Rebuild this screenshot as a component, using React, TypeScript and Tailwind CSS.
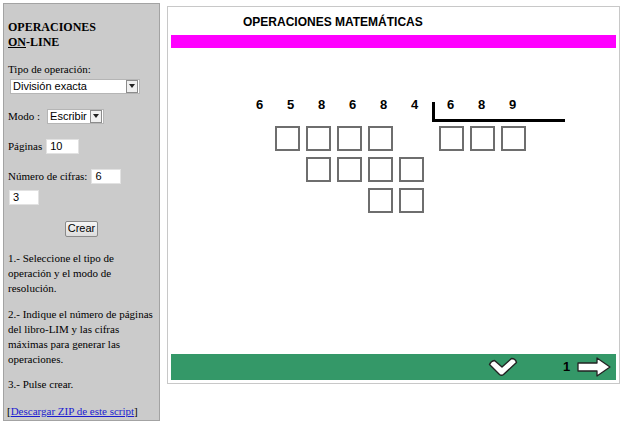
import React from 'react';

const dividend = ['6', '5', '8', '6', '8', '4'];
const divisor = ['6', '8', '9'];

function Box() {
  return <div className="w-[25px] h-[25px] border-2 border-[#6e6e6e] bg-white" />;
}

function Select({ value, width }: { value: string; width: string }) {
  return (
    <div className={`${width} h-[15px] flex items-center bg-white border border-[#b5b5b5] font-['Liberation_Sans'] text-[11px] text-black`}>
      <span className="flex-1 pl-[2px] leading-[13px] whitespace-nowrap overflow-hidden">{value}</span>
      <span className="w-[12px] h-[13px] mr-[1px] flex items-center justify-center bg-[#f0f0f0] border border-[#8c8c8c]">
        <svg width="6" height="4" viewBox="0 0 6 4">
          <path d="M0 0 H6 L3 4 Z" fill="#222" />
        </svg>
      </span>
    </div>
  );
}

function Field({ value, width }: { value: string; width: string }) {
  return (
    <div className={`${width} h-[15px] bg-white border border-[#e2e2e2] pl-[3px] font-['Liberation_Sans'] text-[11px] leading-[13px] text-black`}>
      {value}
    </div>
  );
}

export default function App() {
  return (
    <div className="w-[630px] h-[424px] bg-white flex items-start overflow-hidden">
      {/* left panel */}
      <div className="ml-[3px] mt-[3px] w-[157px] h-[418px] bg-[#cbcbcb] border border-[#a3a3a3] pl-[4px] pt-[16px] font-['Liberation_Serif',serif] text-[11px] leading-[15px] text-black">
        <div className="text-[12px] font-bold">
          OPERACIONES
          <br />
          <span className="underline">ON</span>-LINE
        </div>

        <div className="mt-[12px]">Tipo de operación:</div>
        <div className="mt-[1.5px] ml-[2px]">
          <Select value="División exacta" width="w-[130px]" />
        </div>

        <div className="mt-[15px] flex items-center h-[15px]">
          <span>Modo :</span>
          <span className="ml-[7px]">
            <Select value="Escribir" width="w-[57px]" />
          </span>
        </div>

        <div className="mt-[15px] flex items-center h-[15px]">
          <span>Páginas</span>
          <span className="ml-[4px]">
            <Field value="10" width="w-[33px]" />
          </span>
        </div>

        <div className="mt-[15px] flex items-center h-[16px]">
          <span>Número de cifras:</span>
          <span className="ml-[4px]">
            <Field value="6" width="w-[30px]" />
          </span>
        </div>
        <div className="mt-[5px] ml-[1px]">
          <Field value="3" width="w-[30px]" />
        </div>

        <div className="mt-[16px] flex justify-center pr-[4px]">
          <button className="w-[33px] h-[16px] rounded-[2px] border border-[#8a8a8a] bg-gradient-to-b from-[#f6f6f6] to-[#dcdcdc] font-['Liberation_Sans'] text-[11px] leading-[13px] text-black">
            Crear
          </button>
        </div>

        <p className="mt-[14.5px] whitespace-nowrap">
          1.- Seleccione el tipo de
          <br />
          operación y el modo de
          <br />
          resolución.
        </p>
        <p className="mt-[11px] whitespace-nowrap">
          2.- Indique el número de páginas
          <br />
          del libro-LIM y las cifras
          <br />
          máximas para generar las
          <br />
          operaciones.
        </p>
        <p className="mt-[10px]">3.- Pulse crear.</p>
        <p className="mt-[12px] -ml-[1px] whitespace-nowrap">
          [<a className="text-[#1b1bd0] underline">Descargar ZIP de este script</a>]
        </p>
      </div>

      {/* main panel */}
      <div className="ml-[7px] mt-[6px] w-[453px] h-[378px] border border-[#c8c8c8] bg-white flex flex-col">
        <div className="mt-[7px] pl-[75px] font-['Liberation_Sans',sans-serif] font-bold text-[12px] leading-[16px] text-black">
          OPERACIONES MATEMÁTICAS
        </div>
        <div className="mt-[5px] mx-[3px] h-[13px] bg-[#ff00ff]" />

        <div className="mt-[49px] ml-[76px] flex flex-col font-['Liberation_Sans',sans-serif] font-bold text-[13px] text-black">
          <div className="flex h-[25px]">
            <div className="flex w-[186px]">
              {dividend.map((d, i) => (
                <span key={i} className="w-[31px] text-center leading-[16px]">
                  {d}
                </span>
              ))}
            </div>
            <div className="ml-[2px] flex w-[133px] border-b-[3px] border-black">
              <div className="w-[3px] h-[17px] self-end bg-black" />
              {divisor.map((d, i) => (
                <span key={i} className="w-[31px] text-center leading-[16px]">
                  {d}
                </span>
              ))}
            </div>
          </div>

          <div className="mt-[4px] flex">
            <div className="w-[186px] pl-[31px] flex gap-[6px]">
              <Box />
              <Box />
              <Box />
              <Box />
            </div>
            <div className="ml-[9px] flex gap-[6px]">
              <Box />
              <Box />
              <Box />
            </div>
          </div>
          <div className="mt-[6px] pl-[62px] flex gap-[6px]">
            <Box />
            <Box />
            <Box />
            <Box />
          </div>
          <div className="mt-[6px] pl-[124px] flex gap-[6px]">
            <Box />
            <Box />
          </div>
        </div>

        <div className="mt-auto mb-[3px] mx-[3px] h-[26px] bg-[#349868] flex items-center">
          <svg className="ml-[317px]" width="30" height="20" viewBox="0 0 30 20">
            <path
              d="M1.5 7.5 Q3 4 6.5 3.5 L14 10 L23.5 1.5 Q27.5 1.5 28.5 5.5 L15.5 17.5 Q13.5 19 11.5 17.5 Z"
              fill="#fff"
              stroke="#222"
              strokeWidth="1.4"
              strokeLinejoin="round"
            />
          </svg>
          <span className="ml-[45px] font-['Liberation_Sans',sans-serif] font-bold text-[13px] text-black">1</span>
          <svg className="ml-[7px]" width="34" height="20" viewBox="0 0 34 20">
            <path
              d="M1 6 H20 V1 L33 10 L20 19 V14 H1 Z"
              fill="#fff"
              stroke="#222"
              strokeWidth="1.3"
              strokeLinejoin="round"
            />
          </svg>
        </div>
      </div>
    </div>
  );
}
